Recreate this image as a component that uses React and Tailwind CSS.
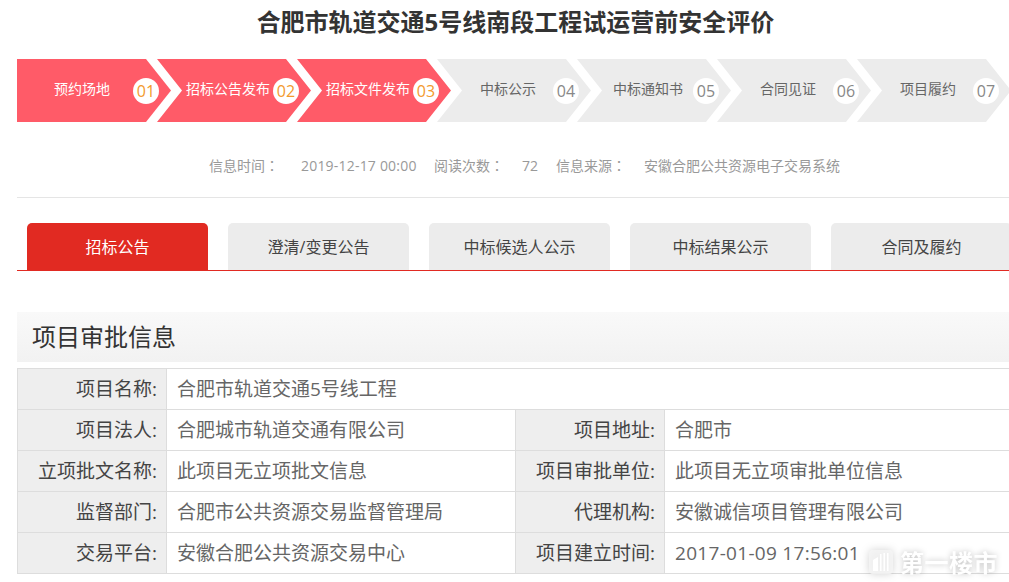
const steps = [
  ["预约场地", "01", true, true],
  ["招标公告发布", "02", true],
  ["招标文件发布", "03", true],
  ["中标公示", "04"],
  ["中标通知书", "05"],
  ["合同见证", "06"],
  ["项目履约", "07"],
];
const tabs = ["招标公告", "澄清/变更公告", "中标候选人公示", "中标结果公示", "合同及履约"];
const rows = [
  ["项目法人:", "合肥城市轨道交通有限公司", "项目地址:", "合肥市"],
  ["立项批文名称:", "此项目无立项批文信息", "项目审批单位:", "此项目无立项审批单位信息"],
  ["监督部门:", "合肥市公共资源交易监督管理局", "代理机构:", "安徽诚信项目管理有限公司"],
  ["交易平台:", "安徽合肥公共资源交易中心", "项目建立时间:", "2017-01-09 17:56:01"],
];
const labelCls = "bg-[#eeeeee] border border-[#dddddd] text-right pr-[9px] pt-[1px] text-[#444444] font-normal";
const valueCls = "border border-[#dddddd] text-left pl-[10px] pt-[1px] text-[#666666] font-normal";
const colon = <span className="font-['Noto_Sans_CJK_TC',sans-serif]">：</span>;

function Step({ label, no, active, first }) {
  return (
    <div
      className={
        "relative shrink-0 w-[154px] h-[63px] -mr-[14px] flex items-center " +
        (active ? "bg-[#ff5b68] text-white " : "bg-[#ececec] text-[#666666] ") +
        (first
          ? "[clip-path:polygon(0_0,129px_0,154px_31.5px,129px_63px,0_63px)]"
          : "[clip-path:polygon(0_0,129px_0,154px_31.5px,129px_63px,0_63px,25px_31.5px)]")
      }
    >
      <span className={"absolute top-[21px] text-[14px] leading-[18px] whitespace-nowrap -translate-x-1/2 " + (first ? "left-[65px]" : "left-[71px]")}>
        {label}
      </span>
      <span
        className={
          "absolute left-[116px] top-[19px] w-[26px] h-[26px] rounded-full bg-white flex items-center justify-center text-[16px] " +
          (active ? "text-[#f39a2d]" : "text-[#888888]")
        }
      >
        {no}
      </span>
    </div>
  );
}

export default function App() {
  return (
    <div className="relative w-[1009px] h-[582px] overflow-hidden bg-white font-['Open_Sans','Noto_Sans_CJK_SC',sans-serif]">
      <h1 className="h-[59px] pt-[4px] text-center text-[24px] leading-[36px] font-bold text-[#333333] pl-[22px]">
        合肥市轨道交通5号线南段工程试运营前安全评价
      </h1>
      <div className="ml-[17px] flex">
        {steps.map((s) => (
          <Step key={s[1]} label={s[0]} no={s[1]} active={s[2]} first={s[3]} />
        ))}
      </div>
      <div className="ml-[17px] h-[76px] border-b border-[#e5e5e5] flex items-center pl-[192px] pt-[11px] text-[14px] text-[#999999] whitespace-nowrap">
        <span className="w-[92px]">信息时间{colon}</span>
        <span className="w-[133px] tracking-[0.2px]">2019-12-17 00:00</span>
        <span className="w-[88px]">阅读次数{colon}</span>
        <span className="w-[34px]">72</span>
        <span className="w-[88px]">信息来源{colon}</span>
        <span>安徽合肥公共资源电子交易系统</span>
      </div>
      <div className="ml-[17px] mt-[25px] pl-[10px] flex gap-[20px] border-b border-[#e12a22] h-[48px] w-[1100px]">
        {tabs.map((t, i) => (
          <div
            key={t}
            className={
              "w-[181px] h-[47px] shrink-0 rounded-t-[5px] flex items-center justify-center text-[16px] " +
              (i === 0 ? "bg-[#e12a22] text-white" : "bg-[#ececec] text-[#444444]")
            }
          >
            {t}
          </div>
        ))}
      </div>
      <div className="ml-[17px] mt-[41px] h-[50px] pl-[15px] flex items-center text-[24px] text-[#333333] bg-gradient-to-b from-[#f9f9f9] to-[#f2f2f2]">
        项目审批信息
      </div>
      <table className="ml-[17px] mt-[6px] w-[1100px] table-fixed border-collapse text-[19px]">
        <colgroup>
          <col className="w-[149px]" />
          <col className="w-[349px]" />
          <col className="w-[149px]" />
          <col />
        </colgroup>
        <tbody>
          <tr className="h-[41px]">
            <th className={labelCls}>项目名称:</th>
            <td className={valueCls} colSpan={3}>合肥市轨道交通5号线工程</td>
          </tr>
          {rows.map((r) => (
            <tr key={r[0]} className="h-[41px]">
              <th className={labelCls}>{r[0]}</th>
              <td className={valueCls}>{r[1]}</td>
              <th className={labelCls}>{r[2]}</th>
              <td className={valueCls + (r[3].startsWith("2017") ? " tracking-[0.3px]" : "")}>{r[3]}</td>
            </tr>
          ))}
        </tbody>
      </table>
      <div className="absolute left-[869px] top-[549px] flex items-center gap-[7px] blur-[0.6px]">
        <svg width="24" height="24" viewBox="0 0 24 24" className="drop-shadow-[0_0_4px_rgba(0,0,0,0.2)]">
          <rect x="0" y="0" width="24" height="24" rx="4" fill="#f4f4f4" fillOpacity="0.85" />
          <path d="M4 10 L9 7 V21 H4 Z" fill="#ffffff" />
          <path d="M11 4 H12.5 V21 H11 Z M14.5 3 H16 V21 H14.5 Z M18 3 H19.5 V21 H18 Z" fill="#ffffff" />
        </svg>
        <span className="text-[24px] leading-[26px] font-bold tracking-[0.5px] text-white font-['Noto_Sans_CJK_SC',sans-serif] [text-shadow:0_0_6px_rgba(0,0,0,0.25)]">
          第一楼市
        </span>
      </div>
    </div>
  );
}
